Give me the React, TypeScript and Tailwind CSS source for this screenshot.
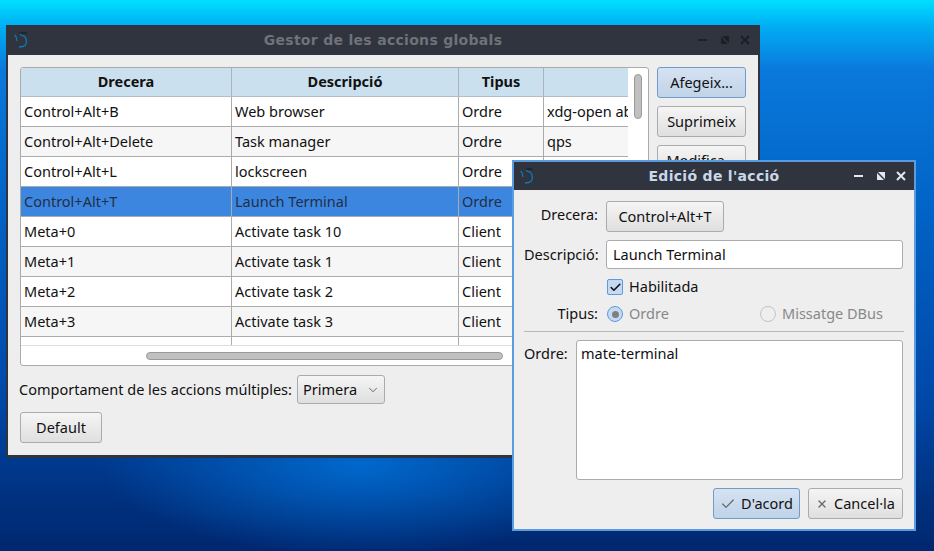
import React from "react";
import { Check, ChevronDown, X } from "lucide-react";

const ROWS = [
  ["Control+Alt+B", "Web browser", "Ordre", "xdg-open about:blank"],
  ["Control+Alt+Delete", "Task manager", "Ordre", "qps"],
  ["Control+Alt+L", "lockscreen", "Ordre", "xdg-screensaver lock"],
  ["Control+Alt+T", "Launch Terminal", "Ordre", "mate-terminal"],
  ["Meta+0", "Activate task 10", "Client", ""],
  ["Meta+1", "Activate task 1", "Client", ""],
  ["Meta+2", "Activate task 2", "Client", ""],
  ["Meta+3", "Activate task 3", "Client", ""],
  ["", "", "", ""],
];

const Logo = () => (
  <svg width="16" height="16" viewBox="0 0 16 16" fill="none">
    <path d="M0.5 3 L2 4.5 L3 9" stroke="#0f78b8" strokeWidth="1.2" />
    <path d="M6 1.5 C8 0.5 11 0.5 13 2" stroke="#20232a" strokeWidth="1.5" />
    <path d="M6 2 C7 3.5 8.5 4 10 4 C12.5 6 13 10 11.5 13 C10 14.5 7.5 15 5 15" stroke="#0f78b8" strokeWidth="1.3" />
  </svg>
);

const WinControls = ({ color }: { color: string }) => (
  <svg width="56" height="12" viewBox="0 0 56 12" fill="none">
    <path d="M2 6 H11" stroke={color} strokeWidth="2" />
    <path d="M26 2 H33 V9 Z M25 3 V10 H32 Z" fill={color} />
    <path d="M45 2 L53 10 M53 2 L45 10" stroke={color} strokeWidth="2" />
  </svg>
);

const TitleBar = ({ title, active }: { title: string; active: boolean }) => (
  <div className={`flex items-center bg-[#2f343f] pl-[6px] pr-[6px] ${active ? "h-[28px]" : "h-[30px]"}`}>
    <div className="w-[56px] shrink-0">
      <Logo />
    </div>
    <div
      className={`flex-1 text-center text-[14px] font-bold tracking-[0.3px] ${
        active ? "text-[#c9d8e8]" : "text-[#6f7278]"
      }`}
      style={{ fontFamily: '"DejaVu Sans", sans-serif' }}
    >
      {title}
    </div>
    <WinControls color={active ? "#e4e8ee" : "#1c1f26"} />
  </div>
);

const Btn = ({ className, children }: { className: string; children: React.ReactNode }) => (
  <div
    className={`flex items-center rounded-[3px] border border-[#ababab] bg-gradient-to-b from-[#f5f5f5] to-[#dfdfdf] text-[#111] ${className}`}
  >
    {children}
  </div>
);

const BtnBlue = ({ className, children }: { className: string; children: React.ReactNode }) => (
  <div
    className={`flex items-center justify-center rounded-[3px] border border-[#6f9cc9] bg-gradient-to-b from-[#d6e2f2] to-[#c0d3e8] text-[#111] ${className}`}
  >
    {children}
  </div>
);

const GestorWindow = () => (
  <div className="absolute left-[6px] top-[25px] h-[433px] w-[754px] border-x-2 border-b-[3px] border-[#2f343f] bg-[#eeeeee] text-[14.5px]">
    <TitleBar title="Gestor de les accions globals" active={false} />
    <div className="flex gap-[8px] pl-[12px] pt-[12px]">
      <div className="relative h-[299px] w-[629px] overflow-hidden rounded-[3px] border border-[#ababab] bg-white">
        <div className="h-[277px] w-[607px] overflow-hidden">
          <div className="flex h-[29px] border-b border-[#b4bcc4] bg-[#cbe0ee] font-bold text-[#111]">
            <div className="flex w-[211px] shrink-0 items-center justify-center border-r border-[#a8b4be]">Drecera</div>
            <div className="flex w-[227px] shrink-0 items-center justify-center border-r border-[#a8b4be]">Descripció</div>
            <div className="flex w-[85px] shrink-0 items-center justify-center border-r border-[#a8b4be]">Tipus</div>
            <div className="flex-1" />
          </div>
          {ROWS.map((row, i) => {
            const selected = i === 3;
            return (
              <div
                key={i}
                className={`flex h-[30px] border-b border-[#ababab] ${
                  selected
                    ? "bg-[#3d86e0] text-[#1f3048]"
                    : i % 2 === 1
                      ? "bg-[#f6f6f6] text-[#111]"
                      : "bg-white text-[#111]"
                }`}
              >
                <div className="flex w-[211px] shrink-0 items-center whitespace-nowrap border-r border-[#ababab] pl-[3px]">{row[0]}</div>
                <div className="flex w-[227px] shrink-0 items-center whitespace-nowrap border-r border-[#ababab] pl-[3px]">{row[1]}</div>
                <div className="flex w-[85px] shrink-0 items-center whitespace-nowrap border-r border-[#ababab] pl-[3px]">{row[2]}</div>
                <div className="flex flex-1 items-center overflow-hidden whitespace-nowrap pl-[3px]">{row[3]}</div>
              </div>
            );
          })}
        </div>
        <div className="absolute inset-x-0 top-[277px] h-px bg-[#dddddd]" />
        <div className="absolute left-[613px] top-[6px] h-[45px] w-[8px] rounded-[4px] border border-[#9a9a9a] bg-[#c0c0c0]" />
        <div className="absolute left-[125px] top-[284px] h-[8px] w-[357px] rounded-[4px] border border-[#9a9a9a] bg-[#c0c0c0]" />
      </div>
      <div className="flex flex-col gap-[8px]">
        <BtnBlue className="h-[31px] w-[89px]">Afegeix...</BtnBlue>
        <Btn className="h-[31px] w-[89px] justify-center">Suprimeix</Btn>
        <Btn className="h-[31px] w-[89px] justify-center">Modifica...</Btn>
      </div>
    </div>
    <div className="flex items-center gap-[6px] pl-[11px] pt-[9px] text-[#111]">
      <span className="w-[272px] whitespace-nowrap">Comportament de les accions múltiples:</span>
      <Btn className="h-[29px] w-[88px] justify-between pl-[5px] pr-[4px]">
        <span>Primera</span>
        <ChevronDown size={14} strokeWidth={1.2} color="#333" />
      </Btn>
    </div>
    <div className="pl-[12px] pt-[8px]">
      <Btn className="h-[31px] w-[82px] justify-center">Default</Btn>
    </div>
  </div>
);

const AccioDialog = () => (
  <div className="absolute left-[512px] top-[160px] h-[371px] w-[404px] border-2 border-[#5b9be0] bg-[#eeeeee] text-[14.5px] text-[#111]">
    <TitleBar title="Edició de l'acció" active />
    <div className="px-[10px] pt-[11px]">
      <div className="flex items-center gap-[8px]">
        <div className="w-[74px] -translate-y-[2px] text-right">Drecera:</div>
        <Btn className="h-[31px] w-[118px] justify-center">Control+Alt+T</Btn>
      </div>
      <div className="mt-[8px] flex items-center gap-[8px]">
        <div className="w-[74px] whitespace-nowrap text-right">Descripció:</div>
        <div className="flex h-[29px] w-[297px] items-center rounded-[3px] border border-[#ababab] bg-white pl-[6px]">
          Launch Terminal
        </div>
      </div>
      <div className="mt-[9px] flex h-[18px] items-center gap-[6px] pl-[83px]">
        <div className="flex h-[16px] w-[16px] items-center justify-center rounded-[2px] border border-[#5b9be0] bg-[#c6daf2]">
          <Check size={13} strokeWidth={3} color="#111" />
        </div>
        <span>Habilitada</span>
      </div>
      <div className="mt-[9px] flex h-[18px] items-center">
        <div className="w-[74px] text-right">Tipus:</div>
        <div className="ml-[9px] flex w-[153px] items-center gap-[6px] text-[#888]">
          <div className="flex h-[16px] w-[16px] items-center justify-center rounded-full border border-[#5b9be0] bg-[#c6daf2]">
            <div className="h-[7px] w-[7px] rounded-full bg-[#808080]" />
          </div>
          <span>Ordre</span>
        </div>
        <div className="flex items-center gap-[6px] text-[#888]">
          <div className="h-[16px] w-[16px] rounded-full border border-[#c4c4c4] bg-[#eeeeee]" />
          <span>Missatge DBus</span>
        </div>
      </div>
      <div className="mt-[8px] h-px w-[380px] bg-[#b8b8b8]" />
      <div className="mt-[8px] flex gap-[8px]">
        <div className="w-[44px] pt-[3px]">Ordre:</div>
        <div className="h-[140px] w-[327px] rounded-[3px] border border-[#ababab] bg-white pl-[4px] pt-[2px]">
          mate-terminal
        </div>
      </div>
      <div className="mt-[8px] flex justify-end gap-[8px] pr-[1px]">
        <BtnBlue className="h-[31px] w-[87px] gap-[5px]">
          <Check size={16} strokeWidth={1.8} color="#666" />
          <span>D'acord</span>
        </BtnBlue>
        <Btn className="h-[31px] w-[95px] justify-center gap-[6px]">
          <X size={12} strokeWidth={2.6} color="#666" />
          <span>Cancel·la</span>
        </Btn>
      </div>
    </div>
  </div>
);

export default function App() {
  return (
    <div
      className="relative h-[551px] w-[934px] overflow-hidden bg-[radial-gradient(ellipse_260px_90px_at_360px_465px,#0068cc_0%,rgba(0,90,190,0)_100%),linear-gradient(to_bottom,#00e0ff_0px,#00b0f4_25px,#0a78dc_70px,#0062c4_220px,#0048a8_400px,#00307e_500px,#00276f_551px)]"
      style={{ fontFamily: '"Noto Sans", "Open Sans", sans-serif' }}
    >
      <GestorWindow />
      <AccioDialog />
    </div>
  );
}
